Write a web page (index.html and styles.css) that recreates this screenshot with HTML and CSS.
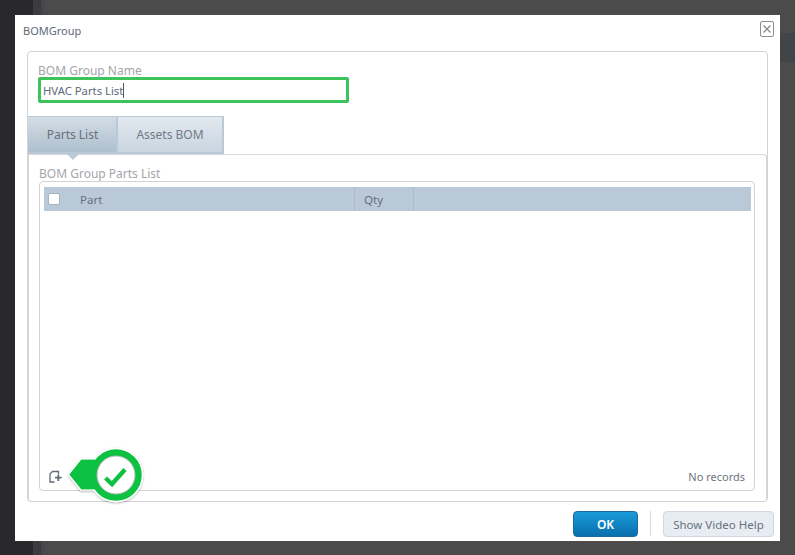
FILE: index.html
```html
<!DOCTYPE html>
<html lang="en">
<head>
<meta charset="utf-8">
<title>BOMGroup</title>
<link rel="stylesheet" href="styles.css">
</head>
<body>
<div class="modal">
  <header class="modal-head">
    <span class="modal-title">BOMGroup</span>
    <button class="close" aria-label="Close">
      <svg width="10" height="10" viewBox="0 0 10 10"><path d="M1.5 1.5l7 7M8.5 1.5l-7 7" stroke="#8a8a8a" stroke-width="1.4" fill="none"/></svg>
    </button>
  </header>
  <section class="panel">
    <div class="name-field">
      <label class="field-label">BOM Group Name</label>
      <div class="name-input"><span>HVAC Parts List</span><i class="caret"></i></div>
    </div>
    <nav class="tabs">
      <div class="tab tab-active">Parts List</div>
      <div class="tab">Assets BOM</div>
    </nav>
    <div class="tab-body">
      <div class="list-label">BOM Group Parts List</div>
      <div class="grid-box">
        <div class="grid-head">
          <div class="col col-check"><i class="checkbox"></i></div>
          <div class="col col-part">Part</div>
          <div class="col col-qty">Qty</div>
          <div class="col col-rest"></div>
        </div>
        <div class="grid-body"></div>
        <div class="grid-foot">
          <div class="add-wrap">
            <svg class="add-icon" width="16" height="15" viewBox="0 0 16 15"><path d="M7.5 2.5H5.5L3 5V13H7.5M7.5 2.5H11.5V5" fill="none" stroke="#5f6b78" stroke-width="1.3"/><path d="M11.3 5.5V12M8 8.7H14.6" fill="none" stroke="#5f6b78" stroke-width="1.8"/></svg>
            <svg class="callout" width="84" height="62" viewBox="0 0 84 62">
              <defs><filter id="s" x="-20%" y="-20%" width="140%" height="140%"><feDropShadow dx="0" dy="1" stdDeviation="1" flood-color="#000" flood-opacity=".3"/></filter></defs>
              <g filter="url(#s)">
                <path d="M5.5 30.5L18 15H50V46H18Z" fill="#0dc143" stroke="#fff" stroke-width="1.5"/>
                <circle cx="53" cy="31" r="26.5" fill="#0dc143" stroke="#fff" stroke-width="1.5"/>
              </g>
              <path d="M6.5 30.5L18.3 15.8H50V45.2H18.3Z" fill="#0dc143"/>
              <circle cx="53" cy="31" r="19" fill="#fff" stroke="#bbb" stroke-width="1"/>
              <path d="M42.5 34L49 40L62 25.5" fill="none" stroke="#0dc143" stroke-width="4.4"/>
            </svg>
          </div>
          <span class="records">No records</span>
        </div>
      </div>
    </div>
  </section>
  <footer class="modal-foot">
    <button class="btn-ok">OK</button>
    <span class="divider"></span>
    <button class="btn-help">Show Video Help</button>
  </footer>
</div>
</body>
</html>
```
FILE: styles.css
```css
* { box-sizing: border-box; }
html, body { margin: 0; height: 100%; }
body {
  width: 795px;
  height: 555px;
  overflow: hidden;
  padding: 15px 15px 14px;
  font-family: "Noto Sans", "Liberation Sans", sans-serif;
  font-size: 12px;
  color: #68707c;
  background:
    linear-gradient(#424547, #424547) 780px 33px / 15px 29px no-repeat,
    linear-gradient(to right, #29292b 0 33px, #3c3c3e 33px 41px, #464648 41px 44px, #4a4a4c 44px 50px, #4b4b4b 50px);
}
.modal {
  width: 765px;
  height: 526px;
  background: #fff;
  display: flex;
  flex-direction: column;
  padding: 0 12px 0 12px;
}
.modal-head {
  height: 36px;
  display: flex;
  align-items: flex-start;
  justify-content: space-between;
  flex: none;
}
.modal-title { margin: 8px 0 0 -4px; color: #5e6877; line-height: 16px; font-size: 11px; }
.close {
  width: 14px;
  height: 16px;
  margin: 6px -6px 0 0;
  padding: 0;
  background: #fff;
  border: 1px solid #8e8e8e;
  border-radius: 2px;
  display: flex;
  align-items: center;
  justify-content: center;
}
.panel {
  height: 451px;
  width: 741px;
  flex: none;
  border: 1px solid #d2d2d2;
  border-radius: 4px;
  display: flex;
  flex-direction: column;
}
.name-field { padding: 11px 0 0 10px; flex: none; height: 64px; }
.field-label { display: block; color: #a3a6ab; font-size: 12px; line-height: 15px; }
.name-input {
  width: 311px;
  height: 26px;
  margin-top: -1px;
  border: 3px solid #3cc35a;
  border-radius: 2px;
  display: flex;
  align-items: center;
  padding-left: 2px;
  color: #5e6877;
  font-size: 11.3px;
}
.caret { width: 1px; height: 15px; background: #555; }
.tabs { display: flex; height: 38px; flex: none; }
.tab {
  width: 106px;
  display: flex;
  align-items: center;
  justify-content: center;
  border: 0 solid #b9c9d8;
  border-width: 1px 2px 2px 0;
  background: linear-gradient(#e2e8ee, #c9d5e0);
  color: #717a87;
}
.tab-active {
  width: 90px;
  padding-left: 1px;
  position: relative;
  background: linear-gradient(#d3dde6, #aebfce);
  color: #68707c;
}
.tab-active::after {
  content: "";
  position: absolute;
  left: 39px;
  top: 100%;
  border: 6px solid transparent;
  border-top-color: #b9c9d8;
  border-bottom-width: 0;
  margin-top: 2px;
}
.tab-body {
  flex: 1;
  border: 1px solid #d8d8d8;
  border-width: 1px 1px 0 1px;
  border-radius: 0 4px 0 0;
  padding: 11px 11px 10px 10px;
  display: flex;
  flex-direction: column;
}
.list-label { color: #a3a6ab; font-size: 12px; line-height: 15px; height: 15px; flex: none; }
.grid-box {
  flex: 1;
  border: 1px solid #d2d2d2;
  border-radius: 4px;
  padding: 5px 3px 0 4px;
  display: flex;
  flex-direction: column;
}
.grid-head {
  height: 24px;
  background: #b9c9d8;
  display: flex;
  flex: none;
  color: #68707c;
  font-size: 11.5px;
}
.col { display: flex; align-items: center; height: 100%; }
.col-check { width: 36px; padding-left: 4px; }
.checkbox { width: 12px; height: 12px; background: #fff; border: 1px solid #a9b4bf; border-radius: 2px; }
.col-part { width: 275px; border-right: 1px solid #abbccb; }
.col-qty { width: 59px; padding-left: 9px; border-right: 1px solid #abbccb; }
.col-rest { flex: 1; }
.grid-body { flex: 1; }
.grid-foot {
  height: 34px;
  flex: none;
  display: flex;
  justify-content: space-between;
  align-items: flex-start;
  margin: 0 6px 0 3px;
}
.add-wrap { position: relative; width: 20px; height: 20px; margin-top: 13px; }
.add-icon { display: block; }
.callout { position: absolute; left: 15.5px; top: -25px; }
.records { color: #6d747e; margin-top: 13px; line-height: 16px; font-size: 11px; }
.modal-foot {
  flex: 1;
  display: flex;
  align-items: flex-start;
  justify-content: flex-end;
  padding-top: 9px;
  margin-right: -6px;
}
.btn-ok {
  width: 65px;
  height: 26px;
  border: 1px solid #1b6a9c;
  border-radius: 4px;
  background: linear-gradient(#1a9bd8, #0a6fae);
  color: #fff;
  font: 600 12px "Noto Sans", sans-serif;
  padding: 0;
}
.divider { width: 1px; height: 25px; background: #d9d9d9; margin: 0 12px; }
.btn-help {
  width: 111px;
  height: 26px;
  border: 1px solid #d0d7df;
  border-radius: 4px;
  background: #e8edf3;
  color: #68707c;
  font: 11.5px "Noto Sans", sans-serif;
  padding: 0;
}
```
